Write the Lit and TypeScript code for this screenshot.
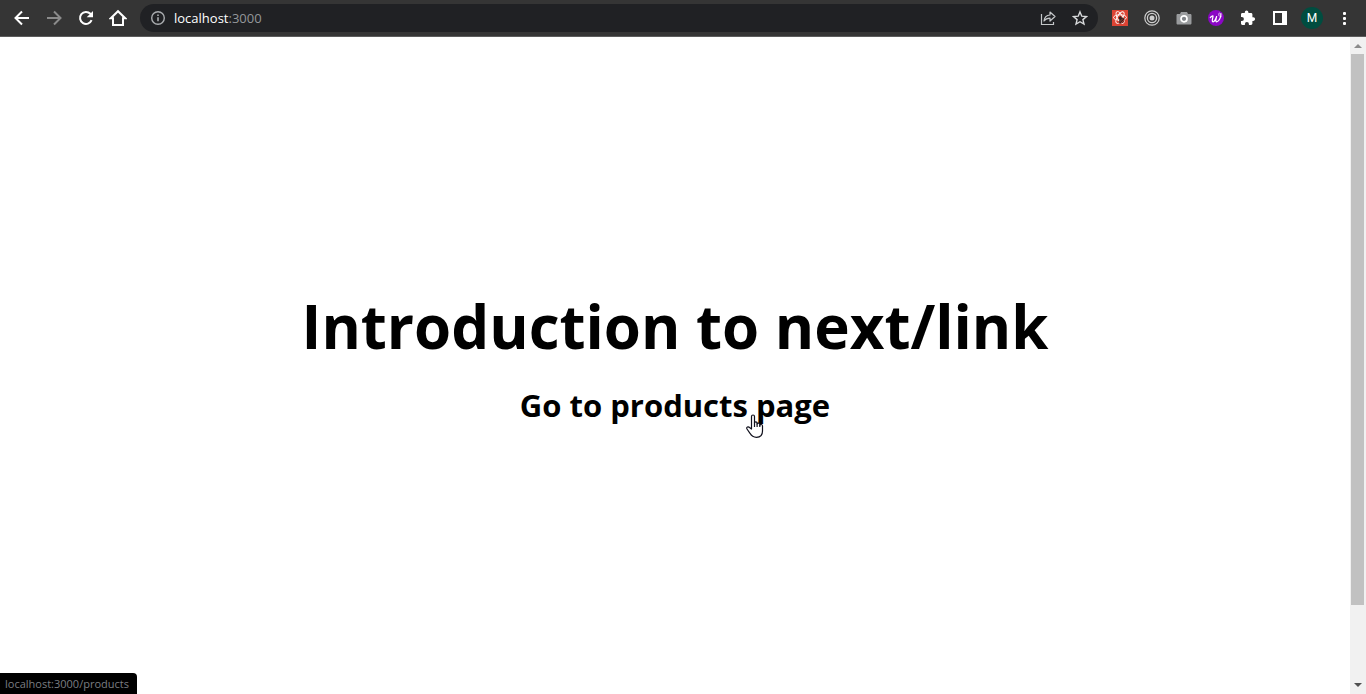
import { LitElement, html, css, svg } from "lit";
import { customElement } from "lit/decorators.js";

const icon = (size: number, body: unknown) =>
  html`<svg class="icon" width=${size} height=${size} viewBox="0 0 ${size} ${size}" aria-hidden="true">${body}</svg>`;

const back = icon(16, svg`<path d="M15 8H2M8 1.5L1.5 8L8 14.5" fill="none" stroke="#fff" stroke-width="2"/>`);
const forward = icon(16, svg`<path d="M1 8h13M8 1.5L14.5 8L8 14.5" fill="none" stroke="#8b8b8b" stroke-width="2"/>`);
const reload = icon(16, svg`<path d="M13.6 10.2A6 6 0 1 1 12.4 3.8L14 5.4" fill="none" stroke="#fff" stroke-width="2"/><path d="M15 1v6.3H8.7z" fill="#fff"/>`);
const home = icon(18, svg`<path d="M1.8 9.2L9 2.2l7.2 7H14V16H4V9.2z" fill="none" stroke="#fff" stroke-width="2"/>`);
const info = icon(16, svg`<circle cx="8" cy="8" r="6.3" fill="none" stroke="#a9acaf" stroke-width="1.4"/><path d="M8 7.2v4M8 4.4V6" stroke="#a9acaf" stroke-width="1.6"/>`);
const share = icon(16, svg`<path d="M1.5 4v10.5h12V12" fill="none" stroke="#c4c7c9" stroke-width="1.2"/><path d="M4 11C4.4 7.500 6.500 5.200 10 5V2l5 4.500-5 4.500V8.200C7.500 8.200 5.500 9 4 11z" fill="none" stroke="#c4c7c9" stroke-width="1.2" stroke-linejoin="round"/>`);
const star = icon(16, svg`<path d="M8 1.900l1.800 4.300 4.600.4-3.500 3 1.100 4.500L8 11.700l-4 2.400 1.100-4.500-3.500-3 4.600-.4z" fill="none" stroke="#d8dadc" stroke-width="1.400"/>`);
const atom = icon(16, svg`<rect width="16" height="16" fill="#dc4434"/>
  <g fill="none" stroke="#fff" stroke-width=".9"><ellipse cx="8" cy="7.500" rx="6.500" ry="2.700"/><ellipse cx="8" cy="7.500" rx="6.500" ry="2.700" transform="rotate(60 8 7.500)"/><ellipse cx="8" cy="7.500" rx="6.500" ry="2.700" transform="rotate(120 8 7.500)"/></g>
  <path d="M6.500 7.500l2-1.500 1 1.500 2 .2 1 1.500-1 3-2.500 1.300-2.500-1 1-2.500z" fill="#352522"/><path d="M7.500 12l3.500-3.500M9 13l3-3" stroke="#dc4434" stroke-width=".7"/>`);
const target = icon(16, svg`<g fill="none" stroke="#cecece"><circle cx="8" cy="8" r="7.200" stroke-width="1.200"/><circle cx="8" cy="8" r="4.600" stroke-width="1.300"/></g><circle cx="8" cy="8" r="2.500" fill="#cecece"/>`);
const camera = icon(16, svg`<path d="M5 2h6l1 2h2.200c.7 0 1.300.5 1.300 1.200v8c0 .8-.6 1.300-1.300 1.300H1.800c-.7 0-1.300-.5-1.300-1.300v-8C.5 4.500 1.100 4 1.800 4H4z" fill="#9a9c9e"/><circle cx="8" cy="8.800" r="3" fill="#818589" stroke="#fff" stroke-width="1.700"/>`);
const script = icon(16, svg`<circle cx="8" cy="8" r="8" fill="#8b06c5"/><path d="M2.300 7.500C4 6 5 5.300 5 6.200c0 1.400-1.500 5-.3 5.600 1.600.6 3.300-3.200 4-5.600-.7 2.800-1.500 5.600 0 5.600 2.400 0 4.600-5.200 4.200-8.300" fill="none" stroke="#fff" stroke-width="1.200" stroke-linecap="round"/><path d="M11.200 3c-1 1.800-.4 3.800 1.800 3.700" fill="none" stroke="#fff" stroke-width=".8" stroke-linecap="round"/>`);
const puzzle = icon(16, svg`<path d="M13.300 7.300h-.9V4.500c0-.8-.6-1.400-1.400-1.400H8.400v-.9a1.800 1.800 0 0 0-3.600 0v.9H2.400C1.600 3.100 1 3.700 1 4.500v2.600h.9a2 2 0 0 1 0 4H1v2.500c0 .8.600 1.400 1.400 1.400h2.500v-.9a2 2 0 0 1 4 0v.9H11c.8 0 1.400-.6 1.400-1.400v-2.700h.9a1.800 1.800 0 0 0 0-3.600z" fill="#fff"/>`);
const panel = icon(16, svg`<path fill-rule="evenodd" d="M1 1h14v14H1zM3 3v10h7V3z" fill="#fff"/>`);
const dots = icon(16, svg`<g fill="#fff"><rect x="7" y="2" width="3" height="3" rx="1"/><rect x="7" y="7" width="3" height="3" rx="1"/><rect x="7" y="12" width="3" height="3" rx="1"/></g>`);

@customElement("browser-toolbar")
export class BrowserToolbar extends LitElement {
  static styles = css`
    :host {
      display: flex;
      align-items: center;
      box-sizing: border-box;
      height: 37px;
      padding: 0 6px;
      background: #353535;
      border-bottom: 1px solid #5c5c5c;
      font-family: "Open Sans", "Noto Sans", sans-serif;
    }
    .icon { display: block; flex: none; }
    .button {
      display: grid;
      place-items: center;
      flex: none;
      width: 32px;
      height: 32px;
      padding: 0;
      border: 0;
      background: none;
    }
    .address {
      display: flex;
      align-items: center;
      flex: 1;
      min-width: 0;
      height: 28px;
      margin: 0 6px;
      padding: 0 2px 0 10px;
      border-radius: 14px;
      background: #202124;
    }
    .url {
      flex: 1;
      min-width: 0;
      margin-left: 8px;
      font-size: 13px;
      line-height: 20px;
      color: #94979a;
    }
    .host { color: #fff; }
    .avatar {
      display: grid;
      place-items: center;
      width: 22px;
      height: 22px;
      border-radius: 50%;
      background: #004d40;
      color: #fff;
      font: 12px/22px Roboto, sans-serif;
    }
  `;

  render() {
    return html`
      <button class="button" aria-label="Back">${back}</button>
      <button class="button" aria-label="Forward">${forward}</button>
      <button class="button" aria-label="Reload">${reload}</button>
      <button class="button" aria-label="Home">${home}</button>
      <div class="address">
        ${info}
        <div class="url"><span class="host">localhost</span>:3000</div>
        <button class="button" aria-label="Share">${share}</button>
        <button class="button" aria-label="Bookmark">${star}</button>
      </div>
      <button class="button" aria-label="React tools">${atom}</button>
      <button class="button" aria-label="Recorder">${target}</button>
      <button class="button" aria-label="Screenshot">${camera}</button>
      <button class="button" aria-label="Writer">${script}</button>
      <button class="button" aria-label="Extensions">${puzzle}</button>
      <button class="button" aria-label="Side panel">${panel}</button>
      <button class="button" aria-label="Profile"><span class="avatar">M</span></button>
      <button class="button" aria-label="Menu">${dots}</button>
    `;
  }
}

@customElement("page-scrollbar")
export class PageScrollbar extends LitElement {
  static styles = css`
    :host {
      display: flex;
      flex-direction: column;
      flex: none;
      width: 16px;
      background: #f1f1f1;
    }
    .arrow { display: block; flex: none; }
    .track { display: flex; flex-direction: column; flex: 1; padding: 0 2px 0 1px; }
    .thumb { flex: 0 0 88.4%; background: #c1c1c1; }
  `;

  render() {
    return html`
      <svg class="arrow" width="16" height="17" viewBox="0 0 16 17" aria-hidden="true"><path d="M4 11l4-4 4 4z" fill="#8b8b8b"/></svg>
      <div class="track"><div class="thumb"></div></div>
      <svg class="arrow" width="16" height="17" viewBox="0 0 16 17" aria-hidden="true"><path d="M4 6h8l-4 4z" fill="#505050"/></svg>
    `;
  }
}

@customElement("app-root")
export class AppRoot extends LitElement {
  static styles = css`
    :host {
      display: flex;
      flex-direction: column;
      position: relative;
      height: 100vh;
      background: #fff;
      color: #000;
      font-family: "Open Sans", "Noto Sans", sans-serif;
    }
    .view { display: flex; flex: 1; min-height: 0; }
    .content {
      display: flex;
      flex-direction: column;
      align-items: center;
      justify-content: center;
      flex: 1;
      min-width: 0;
      padding-bottom: 16px;
    }
    .title { margin: 0; font-size: 60px; line-height: 74px; font-weight: 700; text-align: center; }
    .subtitle { margin: 20px 0 0; font-size: 31px; line-height: 44px; font-weight: 700; text-align: center; }
    .link { position: relative; color: inherit; text-decoration: none; }
    .pointer { position: absolute; right: 66px; bottom: -12px; }
    .status {
      position: absolute;
      left: 0;
      bottom: 0;
      box-sizing: border-box;
      height: 21px;
      padding: 0 8px 0 5px;
      border-radius: 0 4px 0 0;
      background: #000;
      color: #7b7e82;
      font-size: 11px;
      line-height: 21px;
    }
  `;

  render() {
    return html`
      <browser-toolbar></browser-toolbar>
      <div class="view">
        <main class="content">
          <h1 class="title">Introduction to next/link</h1>
          <h2 class="subtitle">
            <a class="link" href="/products">Go to products page<svg class="pointer" width="18" height="24" viewBox="0 0 18 24" aria-hidden="true">
              <path d="M5.500 15V2.500c0-2 3-2 3 0V9c0-1.500 2.600-1.500 2.600.3V10c.2-1.400 2.700-1.200 2.700.5v.7c.4-1.200 2.700-1 2.700.8v5c0 4-2 6.300-6 6.300-3.500 0-5-1.300-6.500-4L1 15c-1-1.800 1.200-3 2.500-1.500z" fill="#fff" stroke="#10101c" stroke-width="1.200" stroke-linejoin="round"/>
              <path d="M8.500 8.500V13M11.100 9.500V13M13.800 10.500V13" fill="none" stroke="#10101c" stroke-width="1.200"/>
            </svg></a>
          </h2>
        </main>
        <page-scrollbar></page-scrollbar>
      </div>
      <div class="status">localhost:3000/products</div>
    `;
  }
}
